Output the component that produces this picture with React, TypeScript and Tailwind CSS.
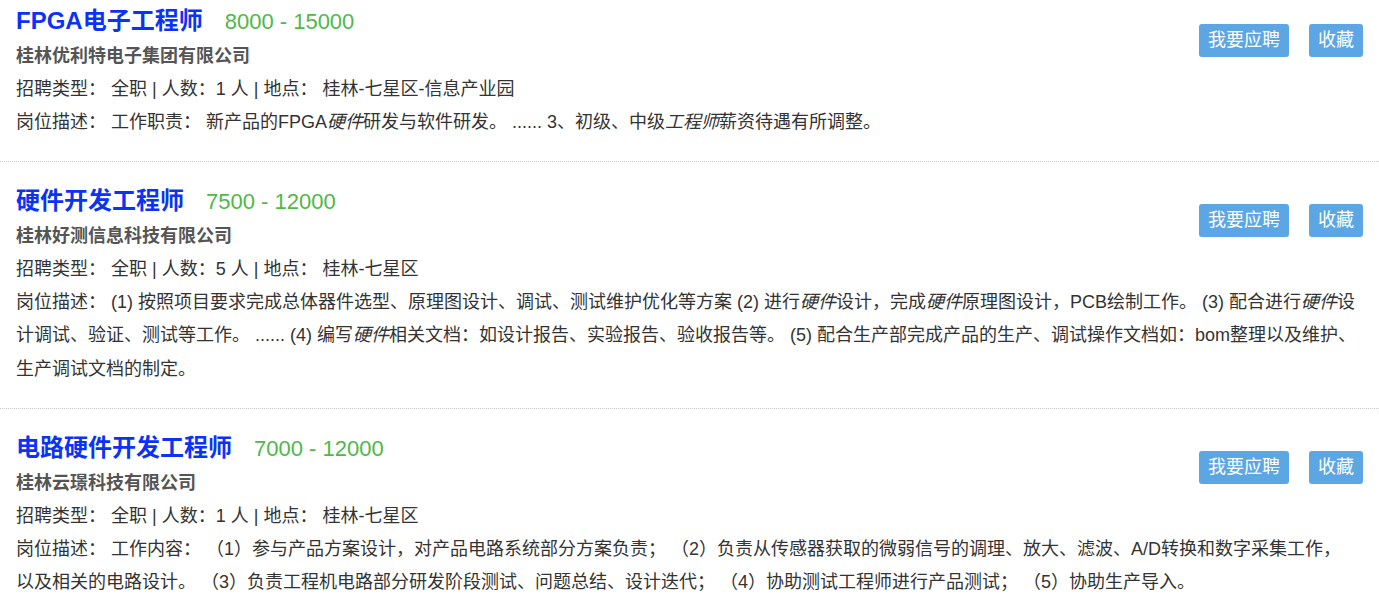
import React from "react";

type Job = {
  title: string;
  salary: string;
  company: string;
  count: string;
  place: string;
  desc: React.ReactNode;
};

const jobs: Job[] = [
  {
    title: "FPGA电子工程师",
    salary: "8000 - 15000",
    company: "桂林优利特电子集团有限公司",
    count: "1",
    place: "桂林-七星区-信息产业园",
    desc: (
      <>
        工作职责： 新产品的FPGA<i>硬件</i>研发与软件研发。 ...... 3、初级、中级<i>工程师</i>薪资待遇有所调整。
      </>
    ),
  },
  {
    title: "硬件开发工程师",
    salary: "7500 - 12000",
    company: "桂林好测信息科技有限公司",
    count: "5",
    place: "桂林-七星区",
    desc: (
      <>
        (1) 按照项目要求完成总体器件选型、原理图设计、调试、测试维护优化等方案 (2) 进行<i>硬件</i>设计，完成<i>硬件</i>原理图设计，PCB绘制工作。 (3) 配合进行<i>硬件</i>设计调试、验证、测试等工作。 ...... (4) 编写<i>硬件</i>相关文档：如设计报告、实验报告、验收报告等。 (5) 配合生产部完成产品的生产、调试操作文档如：bom整理以及维护、生产调试文档的制定。
      </>
    ),
  },
  {
    title: "电路硬件开发工程师",
    salary: "7000 - 12000",
    company: "桂林云璟科技有限公司",
    count: "1",
    place: "桂林-七星区",
    desc: (
      <>
        工作内容： （1）参与产品方案设计，对产品电路系统部分方案负责； （2）负责从传感器获取的微弱信号的调理、放大、滤波、A/D转换和数字采集工作，以及相关的电路设计。 （3）负责工程机电路部分研发阶段测试、问题总结、设计迭代； （4）协助测试工程师进行产品测试； （5）协助生产导入。
      </>
    ),
  },
];

function JobItem({ job, first }: { job: Job; first: boolean }) {
  return (
    <div
      className={`border-b border-dotted border-[#c8c8c8] px-4 pb-[22px] ${
        first ? "pt-[3px]" : "pt-[21px]"
      }`}
    >
      <div className="float-right mt-[21px] flex gap-5">
        <button className="h-[33px] rounded-[3px] bg-[#5ca6e4] px-[9px] text-[18px] leading-[33px] text-white">
          我要应聘
        </button>
        <button className="h-[33px] rounded-[3px] bg-[#5ca6e4] px-[9px] text-[18px] leading-[33px] text-white">
          收藏
        </button>
      </div>

      <div className="flex h-[36px] items-baseline leading-[36px]">
        <h2 className="text-[24px] font-bold text-[#0b33f5]">{job.title}</h2>
        <span className="ml-[22px] text-[22px] text-[#4fb848]">{job.salary}</span>
      </div>
      <div className="text-[18px] font-bold leading-[34px] text-[#555555]">
        {job.company}
      </div>
      <div className="leading-[32.5px]">
        招聘类型： 全职 | 人数：{job.count} 人 | 地点： {job.place}
      </div>
      <p className="pr-[5px] leading-[33.5px]">岗位描述： {job.desc}</p>
    </div>
  );
}

export default function App() {
  return (
    <div className="h-[605px] w-full overflow-hidden bg-white font-['Liberation_Sans','Noto_Sans_CJK_SC',sans-serif] text-[18px] text-[#333333]">
      {jobs.map((job, i) => (
        <JobItem key={job.title} job={job} first={i === 0} />
      ))}
    </div>
  );
}
